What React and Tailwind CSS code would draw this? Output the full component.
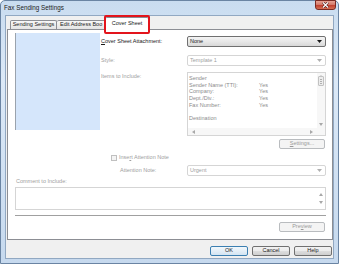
function Arrow({ color = "#000" }) {
  return (
    <svg width="5" height="3" viewBox="0 0 5 3" className="shrink-0">
      <path d="M0 0H5L2.5 3Z" fill={color} />
    </svg>
  );
}

function Combo({ text, disabled }) {
  return (
    <div
      className={
        disabled
          ? "h-[11px] w-[139px] flex items-center justify-between pl-[2px] pr-[3px] rounded-[2px] border border-[#d5d5d5] bg-white text-[#a0a0a0]"
          : "h-[11px] w-[139px] flex items-center justify-between pl-[2px] pr-[3px] rounded-[2px] border border-[#707070] bg-[linear-gradient(180deg,#f4f4f4_0%,#e8e8e8_50%,#d8d8d8_100%)] text-[#1a1a1a]"
      }
    >
      <span className="text-[5.5px] leading-none">{text}</span>
      <Arrow color={disabled ? "#b0b0b0" : "#1a1a1a"} />
    </div>
  );
}

function Btn({ children, disabled, def, w = "w-[38px]" }) {
  let cls =
    "h-[10px] flex items-center justify-center rounded-[2px] text-[5.5px] leading-none ";
  if (disabled)
    cls += "border border-[#b9bcbf] bg-[#f4f4f4] text-[#9a9a9a]";
  else if (def)
    cls +=
      "border border-[#3c7fb1] bg-[linear-gradient(180deg,#f2f8fc_0%,#e4eef7_50%,#d3e4f2_100%)] text-[#1a1a1a]";
  else
    cls +=
      "border border-[#707070] bg-[linear-gradient(180deg,#f2f2f2_0%,#ebebeb_50%,#dddddd_51%,#cfcfcf_100%)] text-[#1a1a1a]";
  return <div className={cls + " " + w}>{children}</div>;
}

export default function App() {
  const rows = [
    ["Sender", ""],
    ["Sender Name (TTI):", "Yes"],
    ["Company:", "Yes"],
    ["Dept./Div.:", "Yes"],
    ["Fax Number:", "Yes"],
    ["", ""],
    ["Destination", ""],
  ];
  return (
    <div className="w-[339px] h-[264px] bg-white font-['Liberation_Sans',Arial,sans-serif] overflow-hidden">
      <div className="w-full h-full flex flex-col border border-[#6a84a3] rounded-t-[5px] bg-[linear-gradient(180deg,#c9dcf0_0%,#dce9f7_30%,#c6d9ee_100%)]">
        {/* title bar */}
        <div className="h-[14px] shrink-0 flex items-start justify-between pl-[3px] pr-[2px]">
          <span className="text-[6.3px] leading-none mt-[4px] text-[#1b1b1b]">
            Fax Sending Settings
          </span>
          <div className="w-[21px] h-[10px] -mt-[1px] rounded-b-[3px] border border-[#7a2a22] bg-[linear-gradient(180deg,#e8a394_0%,#d47a6b_45%,#c2412f_55%,#d56f55_100%)] flex items-center justify-center">
            <svg width="7" height="6" viewBox="0 0 7 6">
              <path d="M1 0.5L6 5.5M6 0.5L1 5.5" stroke="#4a1010" strokeWidth="2.4" />
              <path d="M1 0.5L6 5.5M6 0.5L1 5.5" stroke="#ffffff" strokeWidth="1.3" />
            </svg>
          </div>
        </div>

        {/* client */}
        <div className="flex-1 min-h-0 flex px-[4px] pb-[4px]">
          <div className="flex-1 flex flex-col bg-[#f0f0f0] border border-[#91a8c2] pl-[1px] pr-[0px]">
            {/* tabs */}
            <div className="h-[13px] shrink-0 flex items-end pl-[3px] relative z-10">
              <div className="h-[9px] w-[47px] flex items-center justify-center border border-[#8c8e94] border-b-0 rounded-t-[2px] bg-[linear-gradient(180deg,#f7f7f7,#e4e4e4)] text-[5.5px] leading-none text-[#1a1a1a]">
                Sending Settings
              </div>
              <div className="h-[9px] w-[49px] flex items-center pl-[3px] overflow-hidden whitespace-nowrap border border-l-0 border-[#8c8e94] border-b-0 rounded-t-[2px] bg-[linear-gradient(180deg,#f7f7f7,#e4e4e4)] text-[5.5px] leading-none text-[#1a1a1a]">
                Edit Address Boo
              </div>
              <div className="relative h-[13px] w-[44px] -ml-[1px] -mb-[1px] flex items-center justify-center border border-[#8c8e94] border-b-0 rounded-t-[2px] bg-white text-[5.5px] leading-none text-[#1a1a1a]">
                Cover Sheet
                <div className="absolute -left-[2px] -top-[3px] -right-[2px] -bottom-[4px] border-2 border-[#e3141c] rounded-[2px]" />
              </div>
            </div>

            {/* panel */}
            <div className="h-[211px] shrink-0 bg-white border border-[#8c8e94] flex flex-col pl-[7px] pr-[6px] text-[5.5px] leading-none">
              <div className="flex mt-[3px]">
                <div className="w-[85px] h-[97px] shrink-0 bg-[#d5e6fb] border-l border-[#9aa3ad]" />
                <div className="flex-1 flex flex-col ml-[1px] pt-[3px]">
                  <div className="flex items-center justify-between">
                    <span className="text-[#1a1a1a]">
                      <span className="underline">C</span>over Sheet Attachment:
                    </span>
                    <Combo text="None" />
                  </div>
                  <div className="flex items-center justify-between mt-[8px]">
                    <span className="text-[#a0a0a0]">Style:</span>
                    <Combo text="Template 1" disabled />
                  </div>
                  <div className="flex items-start justify-between mt-[6px]">
                    <span className="text-[#a0a0a0] mt-[2px]">Items to Include:</span>
                    <div className="w-[139px] h-[64px] border border-[#d5d5d5] flex flex-col">
                      <div className="flex-1 flex min-h-0">
                        <div className="flex-1 pl-[1px] pt-[2px] text-[#8c8c8c] leading-[6.7px]">
                          {rows.map((r, i) => (
                            <div key={i} className="flex h-[6.7px]">
                              <span className="w-[70px]">{r[0]}</span>
                              <span>{r[1]}</span>
                            </div>
                          ))}
                        </div>
                        <div className="w-[8px] flex flex-col items-center justify-between bg-[#f7f7f7] py-[2px]">
                          <svg width="4" height="3" viewBox="0 0 4 3"><path d="M0 3H4L2 0Z" fill="#a8a8a8" /></svg>
                          <div className="w-[6px] h-[10px] -mt-[6px] rounded-[1px] border border-[#c2c2c2] bg-[#ededed] flex flex-col items-center justify-center gap-[1px]">
                            <div className="w-[2px] h-px bg-[#b0b0b0]" />
                            <div className="w-[2px] h-px bg-[#b0b0b0]" />
                            <div className="w-[2px] h-px bg-[#b0b0b0]" />
                          </div>
                          <div className="h-[28px]" />
                          <svg width="4" height="3" viewBox="0 0 4 3"><path d="M0 0H4L2 3Z" fill="#a8a8a8" /></svg>
                        </div>
                      </div>
                      <div className="h-[7px] flex items-center justify-between px-[4px] bg-[#f7f7f7]">
                        <svg width="3" height="4" viewBox="0 0 3 4"><path d="M3 0V4L0 2Z" fill="#a8a8a8" /></svg>
                        <svg width="3" height="4" viewBox="0 0 3 4" className="mr-[8px]"><path d="M0 0V4L3 2Z" fill="#a8a8a8" /></svg>
                      </div>
                    </div>
                  </div>
                  <div className="flex justify-end mt-[3px] pr-[1px]">
                    <Btn disabled w="w-[46px]">
                      <span><span className="underline">S</span>ettings...</span>
                    </Btn>
                  </div>
                </div>
              </div>

              <div className="flex items-center mt-[6px] ml-[96px]">
                <div className="w-[6px] h-[6px] border border-[#c0c0c0] bg-[#f4f4f4]" />
                <span className="ml-[2px] text-[#a0a0a0]">
                  Inse<span className="underline">r</span>t Attention Note
                </span>
              </div>
              <div className="flex items-center justify-between mt-[4px] ml-[105px]">
                <span className="text-[#a0a0a0]">Attention Note:</span>
                <Combo text="Urgent" disabled />
              </div>
              <div className="mt-[3px] ml-[1px] text-[#a0a0a0]">Comment to Include:</div>
              <div className="mt-[2px] h-[23px] border border-[#d5d5d5] flex justify-end">
                <div className="w-[8px] flex flex-col items-center justify-between py-[5px]">
                  <svg width="4" height="3" viewBox="0 0 4 3"><path d="M0 3H4L2 0Z" fill="#a8a8a8" /></svg>
                  <svg width="4" height="3" viewBox="0 0 4 3"><path d="M0 0H4L2 3Z" fill="#a8a8a8" /></svg>
                </div>
              </div>
              <div className="mt-[5px] h-px bg-[#a0a0a0]" />
              <div className="flex justify-end mt-[6px] pr-[1px]">
                <Btn disabled w="w-[46px]">
                  <span>Pre<span className="underline">v</span>iew</span>
                </Btn>
              </div>
            </div>

            {/* buttons */}
            <div className="flex justify-end gap-[4px] mt-[6px] pr-[1px]">
              <Btn def>OK</Btn>
              <Btn>Cancel</Btn>
              <Btn>Help</Btn>
            </div>
          </div>
        </div>
      </div>
    </div>
  );
}
